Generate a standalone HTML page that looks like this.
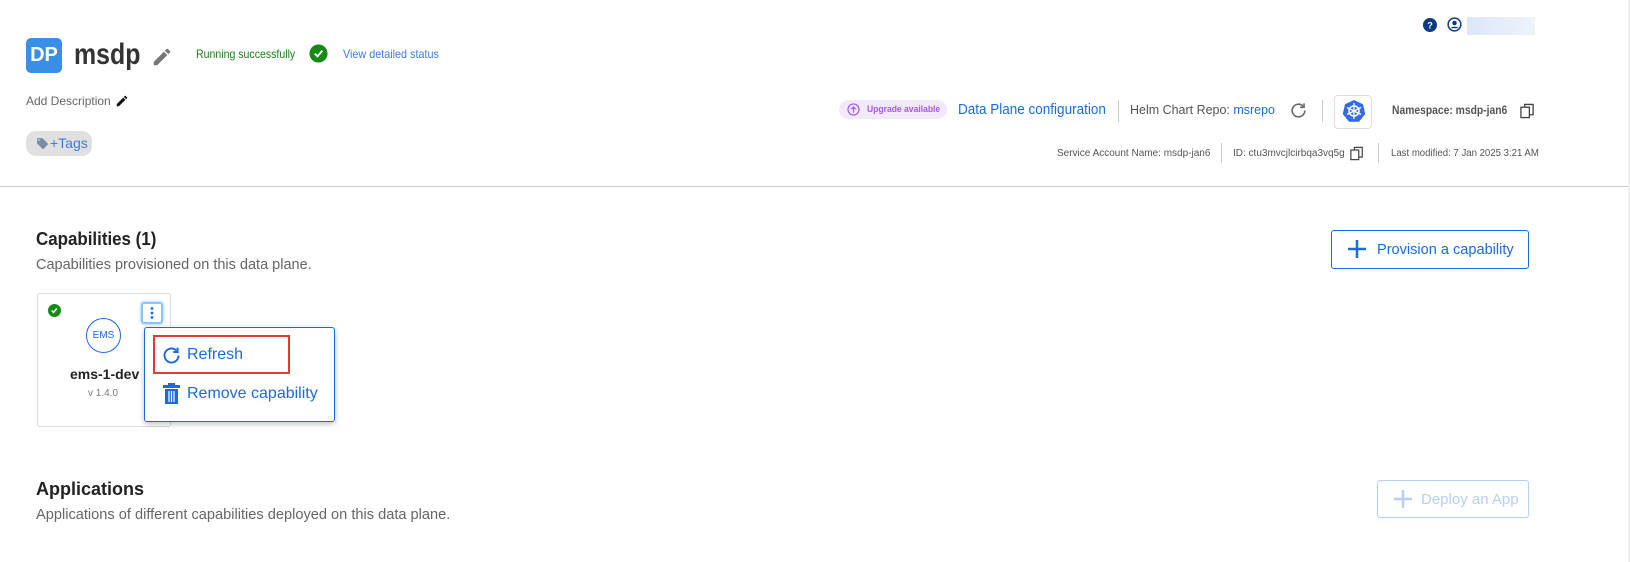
<!DOCTYPE html>
<html><head><meta charset="utf-8"><style>
*{box-sizing:border-box;margin:0;padding:0}
body{width:1630px;height:562px;background:#fff;font-family:"Liberation Sans",sans-serif;position:relative;overflow:hidden;color:#333}
.a{position:absolute;white-space:nowrap}
.sx{transform-origin:left center}
</style></head><body>
<div class="a" style="right:0;top:0;width:2px;height:562px;background:#eee"></div>
<!-- header -->
<div class="a" style="left:26px;top:38px;width:36px;height:35px;background:#3a8ee6;border-radius:5px;color:#fff;font-size:20px;font-weight:bold;text-align:center;line-height:35px">DP</div>
<div class="a sx" style="left:74px;top:38px;font-size:30px;font-weight:bold;color:#333;transform:scaleX(.83)">msdp</div>
<svg class="a" style="left:151px;top:46px" width="22" height="22" viewBox="0 0 24 24"><path fill="#777" d="M3 17.25V21h3.75L17.81 9.94l-3.75-3.75L3 17.25zM20.71 7.04a1 1 0 000-1.41l-2.34-2.34a1 1 0 00-1.41 0l-1.83 1.83 3.75 3.75 1.83-1.83z"/></svg>
<div class="a sx" style="left:196px;top:47px;font-size:12px;color:#1a7f1a;transform:scaleX(.88)">Running successfully</div>
<svg class="a" style="left:309px;top:44px" width="19" height="19" viewBox="0 0 20 20"><circle cx="10" cy="10" r="9.5" fill="#138a13"/><path d="M6 10l3 3 5-6" stroke="#fff" stroke-width="2" fill="none"/></svg>
<div class="a sx" style="left:343px;top:47px;font-size:12px;color:#3d7ce0;transform:scaleX(.9)">View detailed status</div>
<div class="a" style="left:26px;top:94px;font-size:12px;color:#666">Add Description</div>
<svg class="a" style="left:115px;top:94px" width="14" height="14" viewBox="0 0 24 24"><path fill="#111" d="M3 17.25V21h3.75L17.81 9.94l-3.75-3.75L3 17.25zM20.71 7.04a1 1 0 000-1.41l-2.34-2.34a1 1 0 00-1.41 0l-1.83 1.83 3.75 3.75 1.83-1.83z"/></svg>
<div class="a" style="left:26px;top:131px;width:66px;height:25px;background:#e0e0e0;border-radius:10px"></div>
<svg class="a" style="left:36px;top:137px" width="13" height="13" viewBox="0 0 24 24"><path fill="#7a8aa8" d="M21.4 11.6l-9-9A2 2 0 0011 2H4a2 2 0 00-2 2v7c0 .55.22 1.05.59 1.42l9 9a2 2 0 002.82 0l7-7a2 2 0 00-.01-2.82zM5.5 7A1.5 1.5 0 115.5 4a1.5 1.5 0 010 3z"/></svg>
<div class="a" style="left:50px;top:135px;font-size:14px;color:#3d7ce0">+Tags</div>

<svg class="a" style="left:1423px;top:18px" width="14" height="14" viewBox="0 0 20 20"><circle cx="10" cy="10" r="10" fill="#0d3a80"/><text x="10" y="15" font-size="13" font-weight="bold" fill="#fff" text-anchor="middle" font-family="Liberation Sans">?</text></svg>
<svg class="a" style="left:1447px;top:17px" width="15" height="15" viewBox="0 0 20 20"><circle cx="10" cy="10" r="8.5" fill="none" stroke="#0d3a80" stroke-width="2"/><circle cx="10" cy="8" r="3" fill="#0d3a80"/><path d="M4.5 15c2-3 9-3 11 0" fill="#0d3a80"/></svg>
<div class="a" style="left:1467px;top:17px;width:68px;height:18px;background:linear-gradient(90deg,#dbe6f7,#eef3fb)"></div>

<div class="a" style="left:839px;top:100px;width:108px;height:19px;background:#f3e9fc;border-radius:10px"></div>
<svg class="a" style="left:847px;top:103px" width="13" height="13" viewBox="0 0 20 20"><circle cx="10" cy="10" r="8.5" fill="none" stroke="#a45ae0" stroke-width="1.8"/><path d="M10 15V6M6.5 9.5L10 6l3.5 3.5" stroke="#a45ae0" stroke-width="1.8" fill="none"/></svg>
<div class="a sx" style="left:867px;top:104px;font-size:9.5px;color:#a45ae0;font-weight:bold;transform:scaleX(.9)">Upgrade available</div>
<div class="a sx" style="left:958px;top:101px;font-size:15px;color:#1a6be0;transform:scaleX(.9)">Data Plane configuration</div>
<div class="a" style="left:1118px;top:100px;width:1px;height:22px;background:#ccc"></div>
<div class="a sx" style="left:1130px;top:102px;font-size:13px;color:#555;transform:scaleX(.96)">Helm Chart Repo: <span style="color:#1a6be0">msrepo</span></div>
<svg class="a" style="left:1289px;top:101px" width="19" height="19" viewBox="0 0 24 24"><path d="M20 12a8 8 0 11-2.3-5.6" stroke="#666" stroke-width="2" fill="none"/><path d="M19 3v5h-5" stroke="#666" stroke-width="2" fill="none"/></svg>
<div class="a" style="left:1322px;top:100px;width:1px;height:22px;background:#ccc"></div>
<div class="a" style="left:1334px;top:95px;width:38px;height:34px;border:1px solid #ddd;border-radius:4px"></div>
<svg class="a" style="left:1342px;top:99px" width="24" height="24" viewBox="0 0 24 24"><path d="M12 1l9 4.3 2.2 9.7-6.2 7.8H7l-6.2-7.8L3 5.3z" fill="#326ce5"/><circle cx="12" cy="12" r="5" fill="none" stroke="#fff" stroke-width="1.5"/><path d="M12 4v16M5 8.5l14 7M19 8.5l-14 7" stroke="#fff" stroke-width="1.3"/></svg>
<div class="a sx" style="left:1392px;top:103px;font-size:12px;color:#555;font-weight:bold;transform:scaleX(.86)">Namespace: msdp-jan6</div>
<svg class="a" style="left:1520px;top:103px" width="15" height="16" viewBox="0 0 16 16"><rect x="1" y="4" width="9" height="11" fill="none" stroke="#444" stroke-width="1.4"/><path d="M5 4V1h9v11h-4" fill="none" stroke="#444" stroke-width="1.4"/></svg>

<div class="a" style="left:1057px;top:148px;font-size:10px;color:#555">Service Account Name: msdp-jan6</div>
<div class="a" style="left:1221px;top:143px;width:1px;height:20px;background:#ccc"></div>
<div class="a" style="left:1233px;top:148px;font-size:10px;color:#555">ID: ctu3mvcjlcirbqa3vq5g</div>
<svg class="a" style="left:1350px;top:146px" width="14" height="15" viewBox="0 0 16 16"><rect x="1" y="4" width="9" height="11" fill="none" stroke="#444" stroke-width="1.4"/><path d="M5 4V1h9v11h-4" fill="none" stroke="#444" stroke-width="1.4"/></svg>
<div class="a" style="left:1378px;top:143px;width:1px;height:20px;background:#ccc"></div>
<div class="a sx" style="left:1391px;top:148px;font-size:10px;color:#555;transform:scaleX(.96)">Last modified: 7 Jan 2025 3:21 AM</div>

<div class="a" style="left:0;top:186px;width:1628px;height:1px;background:#ccc"></div>

<!-- capabilities -->
<div class="a sx" style="left:36px;top:229px;font-size:18px;font-weight:bold;color:#222;transform:scaleX(.94)">Capabilities (1)</div>
<div class="a" style="left:36px;top:257px;font-size:14.5px;color:#666">Capabilities provisioned on this data plane.</div>
<div class="a" style="left:1331px;top:230px;width:198px;height:39px;border:1px solid #1a6be0;border-radius:3px"></div>
<svg class="a" style="left:1347px;top:239px" width="20" height="20" viewBox="0 0 20 20"><path d="M10 1v18M1 10h18" stroke="#1a6be0" stroke-width="2.5"/></svg>
<div class="a sx" style="left:1377px;top:241px;font-size:15px;color:#1a6be0;transform:scaleX(.97)">Provision a capability</div>

<div class="a" style="left:37px;top:293px;width:134px;height:134px;border:1px solid #ddd;border-radius:3px"></div>
<svg class="a" style="left:48px;top:304px" width="13" height="13" viewBox="0 0 20 20"><circle cx="10" cy="10" r="10" fill="#138a13"/><path d="M5.5 10l3 3 5-6" stroke="#fff" stroke-width="2.4" fill="none"/></svg>
<div class="a" style="left:141px;top:302px;width:22px;height:22px;border:2px solid #8cc4f5;border-radius:3px;box-shadow:0 0 3px #8cc4f5"></div>
<svg class="a" style="left:148px;top:306px" width="8" height="14" viewBox="0 0 8 14"><circle cx="4" cy="2.5" r="1.4" fill="#1a6be0"/><circle cx="4" cy="7" r="1.4" fill="#1a6be0"/><circle cx="4" cy="11.5" r="1.4" fill="#1a6be0"/></svg>
<div class="a" style="left:86px;top:318px;width:35px;height:35px;border:1px solid #1a6be0;border-radius:50%;font-size:10px;color:#1a6be0;text-align:center;line-height:33px">EMS</div>
<div class="a" style="left:70px;top:366px;font-size:14px;font-weight:bold;color:#222">ems-1-dev</div>
<div class="a" style="left:88px;top:388px;font-size:10px;color:#777">v 1.4.0</div>

<div class="a" style="left:144px;top:327px;width:191px;height:95px;background:#fff;border:1px solid #1a6be0;border-radius:3px;box-shadow:0 2px 6px rgba(0,0,0,.25)"></div>
<div class="a" style="left:153px;top:335px;width:137px;height:39px;border:2.5px solid #e53935"></div>
<svg class="a" style="left:161px;top:345px" width="21" height="21" viewBox="0 0 24 24"><path d="M20 12a8 8 0 11-2.3-5.6" stroke="#1a6be0" stroke-width="2.2" fill="none"/><path d="M19 3v5h-5" stroke="#1a6be0" stroke-width="2.2" fill="none"/></svg>
<div class="a" style="left:187px;top:346px;font-size:16px;color:#1a6be0">Refresh</div>
<svg class="a" style="left:162px;top:383px" width="19" height="21" viewBox="0 0 19 21"><rect x="1" y="2" width="17" height="3" fill="#1a6be0"/><rect x="6" y="0" width="7" height="2" fill="#1a6be0"/><rect x="3" y="6" width="13" height="15" fill="#1a6be0"/><path d="M7 8v11M9.5 8v11M12 8v11" stroke="#fff" stroke-width="1.2"/></svg>
<div class="a" style="left:187px;top:385px;font-size:16px;color:#1a6be0">Remove capability</div>

<!-- applications -->
<div class="a" style="left:36px;top:479px;font-size:18px;font-weight:bold;color:#222">Applications</div>
<div class="a" style="left:36px;top:507px;font-size:14.6px;color:#666">Applications of different capabilities deployed on this data plane.</div>
<div class="a" style="left:1377px;top:480px;width:152px;height:38px;border:1px solid #b5d0f5;border-radius:3px"></div>
<svg class="a" style="left:1393px;top:489px" width="20" height="20" viewBox="0 0 20 20"><path d="M10 1v18M1 10h18" stroke="#b5d0f5" stroke-width="2.5"/></svg>
<div class="a" style="left:1421px;top:491px;font-size:15px;color:#b5d0f5">Deploy an App</div>
</body></html>
